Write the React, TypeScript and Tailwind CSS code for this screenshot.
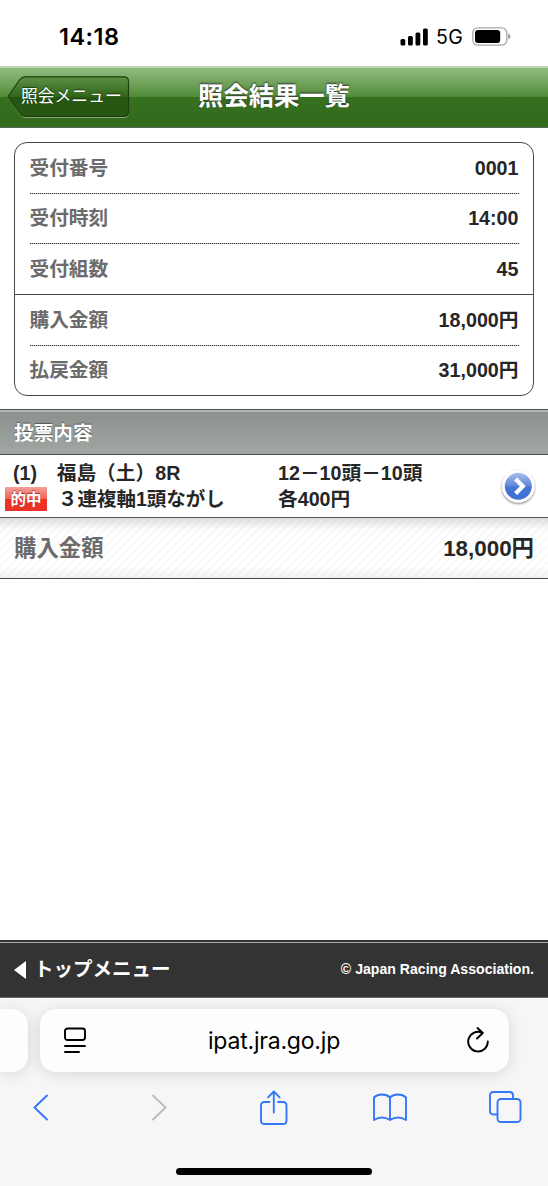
import type { ReactNode } from 'react';

const summary = [
  { label: '受付番号', value: '0001' },
  { label: '受付時刻', value: '14:00' },
  { label: '受付組数', value: '45' },
];

const amounts = [
  { label: '購入金額', value: '18,000円' },
  { label: '払戻金額', value: '31,000円' },
];

const StatusBar = () => (
  <div className="flex h-[66px] shrink-0 items-center justify-between pt-[7px] pr-[37px] pl-[59px] font-['Inter','Liberation_Sans',sans-serif] text-black">
    <span className="text-[23.5px] font-semibold tracking-[0.5px]">14:18</span>
    <div className="flex items-center">
      <svg width="28" height="18" viewBox="0 0 28 18">
        <rect x="0.5" y="11" width="4.8" height="6.5" rx="1.5" />
        <rect x="8" y="8" width="4.8" height="9.5" rx="1.5" />
        <rect x="15.5" y="4.5" width="4.8" height="13" rx="1.5" />
        <rect x="23" y="0.5" width="4.8" height="17" rx="1.5" />
      </svg>
      <span className="ml-[8px] w-[27px] pt-[2px] text-[19.5px] tracking-[0.3px]">5G</span>
      <svg className="ml-[9px]" width="39" height="19" viewBox="0 0 39 19">
        <rect x="0.8" y="0.8" width="34" height="17.4" rx="5" fill="none" stroke="#a9a9a9" strokeWidth="1.3" />
        <rect x="3" y="3" width="25.2" height="13" rx="3" />
        <path d="M36.2 6.5q2.2.8 2.2 3t-2.2 3z" fill="#999" />
      </svg>
    </div>
  </div>
);

const Header = () => (
  <header className="grid h-[62px] shrink-0 grid-cols-[1fr_auto_1fr] items-center border-t-2 border-b border-t-[#bdd5b0] border-b-[#5b645a] bg-[linear-gradient(#93bb82_0%,#518c38_49%,#35701f_50%,#336a1d_100%)] pb-px">
    <button className="relative ml-[7px] flex h-[42px] w-[123px] items-center pl-[14px]">
      <svg className="absolute inset-0" width="123" height="42" viewBox="0 0 123 42">
        <defs>
          <linearGradient id="back" x1="0" y1="0" x2="0" y2="1">
            <stop offset="0" stopColor="#5d9148" />
            <stop offset="0.5" stopColor="#316519" />
            <stop offset="0.51" stopColor="#275512" />
            <stop offset="1" stopColor="#285713" />
          </linearGradient>
        </defs>
        <path d="M1 21 12.5 4.5Q15 1.5 18 1.5H117Q121.5 1.5 121.5 6V37Q121.5 41.5 117 41.5H18Q15 41.5 12.5 38Z" fill="none" stroke="#84a876" strokeWidth="1" />
        <path d="M1 20.5 12.5 4Q15 .8 18 .8H117Q121.5 .8 121.5 5V36Q121.5 40.3 117 40.3H18Q15 40.3 12.5 37Z" fill="url(#back)" stroke="#1d400f" strokeWidth="1.2" />
      </svg>
      <span className="relative pt-px text-[16.8px] leading-none whitespace-nowrap text-white [text-shadow:0_-1px_1px_#1d3d10]">照会メニュー</span>
    </button>
    <h1 className="text-[25.3px] leading-none font-bold text-white [text-shadow:0_-1px_2px_#333]">照会結果一覧</h1>
  </header>
);

const Row = ({ label, value }: { label: string; value: string }) => (
  <div className="flex h-[50.6px] items-center justify-between">
    <span className="text-[#6b6b6b]">{label}</span>
    <span>{value}</span>
  </div>
);

const Dots = () => (
  <div className="-mt-px h-px bg-[repeating-linear-gradient(90deg,#333_0_1px,#bbb_1px_2px)]" />
);

const SummaryCard = () => (
  <section className="mx-[14px] mt-[14px] h-[254px] shrink-0 rounded-[13px] border-[1.3px] border-[#484848] text-[19.7px] font-bold">
    <div className="h-[152px] border-b border-[#484848] px-[14.5px]">
      {summary.map((item, i) => (
        <div key={item.label}>
          <Row {...item} />
          {i < summary.length - 1 && <Dots />}
        </div>
      ))}
    </div>
    <div className="px-[14.5px]">
      {amounts.map((item, i) => (
        <div key={item.label}>
          <Row {...item} />
          {i === 0 && <Dots />}
        </div>
      ))}
    </div>
  </section>
);

const ArrowBadge = () => (
  <svg className="shrink-0" width="40" height="40" viewBox="0 0 40 40">
    <defs>
      <linearGradient id="ball" x1="0" y1="0" x2="0" y2="1">
        <stop offset="0" stopColor="#a6bfec" />
        <stop offset="0.48" stopColor="#6089d9" />
        <stop offset="0.52" stopColor="#4674d1" />
        <stop offset="1" stopColor="#3e70d8" />
      </linearGradient>
      <filter id="drop" x="-20%" y="-20%" width="140%" height="150%">
        <feDropShadow dx="0" dy="1.2" stdDeviation="1.2" floodColor="#000" floodOpacity="0.55" />
      </filter>
    </defs>
    <circle cx="20.3" cy="20.3" r="16.3" fill="#fff" filter="url(#drop)" />
    <circle cx="20.3" cy="20.3" r="13.5" fill="url(#ball)" />
    <path d="m17.6 13.1 7.2 7.2-7.2 7.2" fill="none" stroke="#fff" strokeWidth="4.2" />
  </svg>
);

const BetRow = () => (
  <div className="flex h-[63px] shrink-0 items-center border-b-[1.5px] border-[#555] text-[19.7px] leading-[26px] font-bold">
    <div className="w-[278px]">
      <p className="pl-[13px]">(1)　福島（土）8R</p>
      <div className="flex items-center pl-[5px]">
        <span className="flex h-[24px] w-[42px] items-center justify-center bg-[linear-gradient(#f3a29c_0%,#f06058_49%,#ec3227_50%,#ec3227_100%)] pt-px text-[15.5px] leading-none text-white [text-shadow:0_-1px_1px_#a33]">的中</span>
        <span className="ml-[11px] text-[19.5px]">３連複軸1頭ながし</span>
      </div>
    </div>
    <div className="flex-1">
      <p>12－10頭－10頭</p>
      <p>各400円</p>
    </div>
    <div className="pr-[10px]">
      <ArrowBadge />
    </div>
  </div>
);

const Icon = ({ w, h, children }: { w: number; h: number; children: ReactNode }) => (
  <svg width={w} height={h} viewBox={`0 0 ${w} ${h}`} fill="none" stroke="currentColor" strokeWidth="1.9" strokeLinecap="round" strokeLinejoin="round">
    {children}
  </svg>
);

const BrowserBar = () => (
  <div className="flex h-[188px] shrink-0 flex-col overflow-hidden bg-[#f6f6f7] pt-[11px] text-black">
    <div className="flex h-[63px] gap-[11.5px]">
      <div className="w-[28px] rounded-r-[16px] bg-[#fdfdfd] shadow-[0_2px_16px_rgba(0,0,0,0.13)]" />
      <div className="flex w-[469px] items-center justify-between rounded-[16px] bg-[#fdfdfd] pr-[20px] pl-[24px] shadow-[0_2px_16px_rgba(0,0,0,0.13)]">
        <Icon w={22} h={27}>
          <rect x="1" y="1.5" width="20" height="11.5" rx="2.5" />
          <path d="M1 19H21M1 25H15" />
        </Icon>
        <span className="pt-[2px] pr-[4px] font-['Inter','Liberation_Sans',sans-serif] text-[23px] tracking-[-0.2px]">ipat.jra.go.jp</span>
        <Icon w={22} h={27}>
          <path d="M20.8 14.5A9.8 9.8 0 1 1 14.8 5.6M10.5 1 15.8 6 10 11.5" />
        </Icon>
      </div>
    </div>
    <div className="flex h-[70px] items-center pl-[33px] text-[#3478f6]">
      <Icon w={15} h={27}>
        <path d="M14 1.5 1.5 13.5 14 25.5" />
      </Icon>
      <span className="ml-[104px] text-[#bdbdbf]">
        <Icon w={15} h={27}>
          <path d="M1 1.5 13.5 13.5 1 25.5" />
        </Icon>
      </span>
      <span className="ml-[93px]">
        <Icon w={28} h={35}>
          <path d="M9.5 12H4.5Q1 12 1 15.5V30.5Q1 34 4.5 34H23Q26.5 34 26.5 30.5V15.5Q26.5 12 23 12H18M13.8 22.5V1.5M8 7.3 13.8 1.5 19.6 7.3" />
        </Icon>
      </span>
      <span className="ml-[85px]">
        <Icon w={34} h={29}>
          <path d="M17 4.5C13 .5 5 .5 1 4.5V27Q9 22 17 27Q25 22 33 27V4.5C29 .5 21 .5 17 4.5V27" />
        </Icon>
      </span>
      <span className="ml-[82px]">
        <Icon w={33} h={32}>
          <path d="M8.5 23.5H4.5Q1 23.5 1 20V4.5Q1 1 4.5 1H20.500Q24 1 24 4.5V8" />
          <rect x="8.5" y="8" width="23" height="23" rx="3.5" />
        </Icon>
      </span>
    </div>
    <div className="mx-auto mt-[26px] h-[7px] w-[196px] shrink-0 rounded-full bg-black" />
  </div>
);

const App = () => (
  <div className="flex h-[1186px] w-[548px] flex-col overflow-hidden bg-white font-['Liberation_Sans','Noto_Sans_CJK_JP',sans-serif] text-[#262626]">
    <StatusBar />
    <Header />
    <SummaryCard />
    <h2 className="mt-[13px] flex h-[46px] shrink-0 items-center border-y border-[#4b4d4c] bg-[linear-gradient(#8b908c,#a0a6a2)] pt-[3px] pl-[14px] text-[19.7px] font-bold text-white shadow-[inset_0_2px_0_#b4b8b5] [text-shadow:0_-1px_1px_#555]">
      投票内容
    </h2>
    <BetRow />
    <div className="flex h-[61px] shrink-0 items-center justify-between border-b-[1.5px] border-[#484848] bg-[linear-gradient(#0002_0%,transparent_20%,transparent_80%,#0000000c_100%),repeating-linear-gradient(135deg,#fff_0_3px,#f8f8f8_4px_5px,#fff_6px)] px-[14px] pt-[2px] text-[22.4px] font-bold">
      <span className="text-[#6b6b6b]">購入金額</span>
      <span>18,000円</span>
    </div>
    <div className="flex-1" />
    <footer className="flex h-[58px] shrink-0 items-center justify-between border-t-2 border-b border-t-[#333] border-b-[#666] bg-[#333] px-[14px] font-bold text-white shadow-[inset_0_1px_0_#aaa]">
      <div className="flex items-center text-[19.5px]">
        <svg className="mr-[8px]" width="12" height="18" viewBox="0 0 12 18">
          <path d="M0 9 12 0V18Z" fill="#fff" />
        </svg>
        トップメニュー
      </div>
      <small className="text-[14.1px]">© Japan Racing Association.</small>
    </footer>
    <BrowserBar />
  </div>
);

export default App;
